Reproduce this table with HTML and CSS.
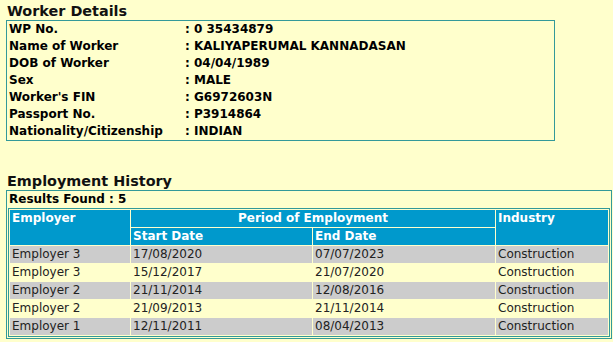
FILE: index.html
```html
<!DOCTYPE html>
<html>
<head>
<meta charset="utf-8">
<link rel="stylesheet" href="styles.css">
</head>
<body>
<h2 class="section-title">Worker Details</h2>
<table class="details">
  <tr><th>WP No.</th><td>: 0 35434879</td></tr>
  <tr><th>Name of Worker</th><td>: KALIYAPERUMAL KANNADASAN</td></tr>
  <tr><th>DOB of Worker</th><td>: 04/04/1989</td></tr>
  <tr><th>Sex</th><td>: MALE</td></tr>
  <tr><th>Worker's FIN</th><td>: G6972603N</td></tr>
  <tr><th>Passport No.</th><td>: P3914864</td></tr>
  <tr><th>Nationality/Citizenship</th><td>: INDIAN</td></tr>
</table>

<h2 class="section-title history-title">Employment History</h2>
<div class="history">
  <div class="results">Results Found : 5</div>
  <table class="grid">
    <thead>
      <tr>
        <th rowspan="2" class="c-emp">Employer</th>
        <th colspan="2" class="center">Period of Employment</th>
        <th rowspan="2" class="c-ind">Industry</th>
      </tr>
      <tr>
        <th class="c-start">Start Date</th>
        <th class="c-end">End Date</th>
      </tr>
    </thead>
    <tbody>
      <tr class="odd"><td>Employer 3</td><td>17/08/2020</td><td>07/07/2023</td><td>Construction</td></tr>
      <tr class="even"><td>Employer 3</td><td>15/12/2017</td><td>21/07/2020</td><td>Construction</td></tr>
      <tr class="odd"><td>Employer 2</td><td>21/11/2014</td><td>12/08/2016</td><td>Construction</td></tr>
      <tr class="even"><td>Employer 2</td><td>21/09/2013</td><td>21/11/2014</td><td>Construction</td></tr>
      <tr class="odd"><td>Employer 1</td><td>12/11/2011</td><td>08/04/2013</td><td>Construction</td></tr>
    </tbody>
  </table>
</div>
</body>
</html>
```

FILE: styles.css
```css
html, body {
  margin: 0;
  padding: 0;
  background: #ffffcc;
}
body {
  font-family: "DejaVu Sans", Verdana, sans-serif;
  color: #000;
  padding-left: 6px;
}
.section-title {
  margin: 0;
  padding: 2px 0 0 1px;
  font-size: 14.4px;
  line-height: 18px;
  font-weight: bold;
  color: #111;
}
.history-title {
  margin-top: 29px;
}
.details {
  border: 1px solid #339999;
  border-spacing: 0;
  width: 549px;
  font-size: 12px;
  line-height: 17px;
}
.details th {
  text-align: left;
  font-weight: bold;
  padding: 0 0 0 2px;
  width: 176px;
}
.details td {
  font-weight: bold;
  padding: 0;
}
.history {
  width: 602px;
  border: 1px solid #339999;
  padding: 0 1px 1px 1px;
}
.results {
  font-size: 12px;
  font-weight: bold;
  line-height: 17px;
  padding-left: 1px;
}
.grid {
  width: 100%;
  border: 1px solid #339999;
  border-spacing: 1px;
  font-size: 12px;
  line-height: 17px;
}
.grid th {
  background: #0099cc;
  color: #fff;
  font-weight: bold;
  text-align: left;
  vertical-align: top;
  padding: 0 2px;
}
.grid th.center {
  text-align: center;
}
.grid td {
  padding: 0 2px;
  color: #222;
}
.c-emp { width: 116px; }
.c-start { width: 177px; }
.c-end { width: 178px; }
.c-ind { width: 108px; }
.odd td { background: #cccccc; }
.even td { background: #ffffcc; }
```
